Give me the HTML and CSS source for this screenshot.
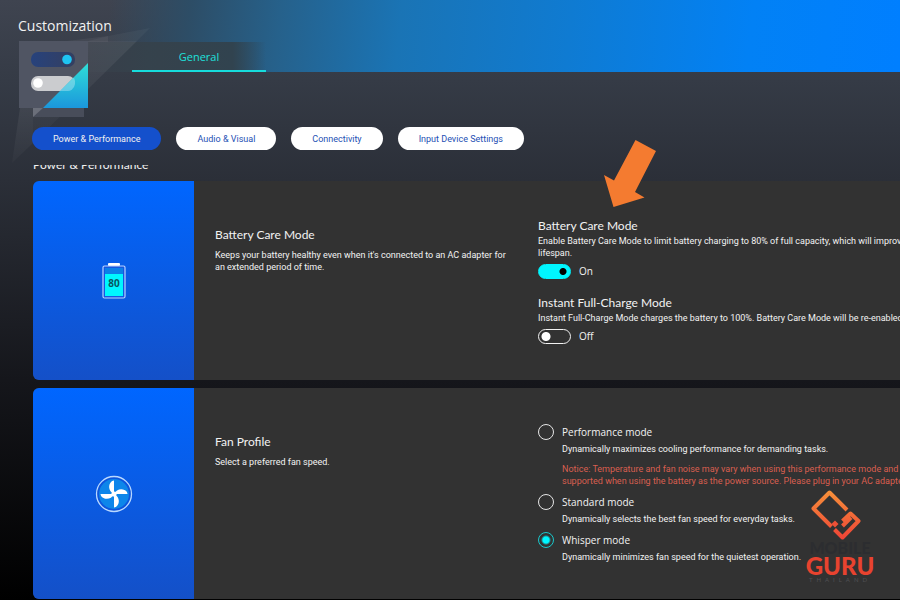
FILE: index.html
```
<!DOCTYPE html>
<html lang="en">
<head>
  <meta charset="UTF-8" />
  <meta name="viewport" content="width=device-width, initial-scale=1.0" />
  <title>Customization</title>
  <link rel="stylesheet" href="styles.css">
</head>
<body>
  <header class="header">
    <svg class="header-shards" width="160" height="170" viewBox="0 0 160 170" aria-hidden="true">
      <defs>
        <linearGradient id="shard" x1="0" y1="0" x2="0" y2="1">
          <stop offset="0" stop-color="#fff" stop-opacity=".07" />
          <stop offset="1" stop-color="#fff" stop-opacity=".02" />
        </linearGradient>
      </defs>
      <polygon points="58,42 108,36 108,42" fill="#fff" opacity=".05" />
      <polygon points="88,41 137,41 33,143 33,108 88,108" fill="url(#shard)" />
      <polygon points="88,41 108,36 150,28 137,41" fill="#fff" opacity=".04" />
      <polygon points="20,108 33,108 33,143 12,163" fill="url(#shard)" />
    </svg>
    <h1 class="title">Customization</h1>
    <div class="tab-row">
      <svg class="app-icon" width="70" height="77" viewBox="0 0 70 77" aria-hidden="true">
        <defs>
          <linearGradient id="corner" x1="0" y1="0" x2="0" y2="1">
            <stop offset="0" stop-color="#2fdfd8" />
            <stop offset="1" stop-color="#1b97dc" />
          </linearGradient>
          <linearGradient id="switch" x1="0" y1="0" x2="1" y2="0">
            <stop offset="0" stop-color="#27427c" />
            <stop offset="1" stop-color="#343f60" />
          </linearGradient>
        </defs>
        <rect x="14" y="67" width="51" height="9" fill="#484d5a" />
        <polygon points="14,67 24,67 14,76" fill="#6b6f7a" />
        <rect width="69" height="67" fill="#505563" />
        <rect x="12" y="11" width="44" height="15" rx="7" fill="url(#switch)" />
        <circle cx="48" cy="18.500" r="4.800" fill="#1fc4f2" />
        <rect x="12" y="35" width="44" height="15" rx="7" fill="#cbcccf" />
        <circle cx="19" cy="42" r="4.800" fill="#fff" />
        <polygon points="69,22 69,67 24,67" fill="url(#corner)" />
        <path d="M41 50 L55 36.500 Q58 44 53 48.500 Q51 50 49 50 Z" fill="#fff" opacity=".3" />
      </svg>
      <nav class="tabs">
        <a class="tab" href="#general">General</a>
      </nav>
    </div>
  </header>

  <nav class="filters">
    <button class="pill active">Power &amp; Performance</button>
    <button class="pill">Audio &amp; Visual</button>
    <button class="pill">Connectivity</button>
    <button class="pill">Input Device Settings</button>
  </nav>

  <main class="content" id="general">
    <h2 class="section-title">Power &amp; Performance</h2>

    <section class="card">
      <div class="tile">
        <svg width="24" height="36" viewBox="0 0 24 36" aria-hidden="true">
          <rect x="6" y="0" width="12" height="3" rx="1" fill="#fff" />
          <rect x="1" y="3" width="22" height="32" rx="1.500" fill="#1558e0" stroke="#b9d2ff" stroke-width="1.200" />
          <rect x="3" y="5" width="18" height="6" fill="#0b7fe8" />
          <rect x="3" y="11" width="18" height="22" fill="#00f6ff" />
          <text class="battery-level" x="12" y="24" text-anchor="middle">80</text>
        </svg>
      </div>
      <div class="about">
        <h3 class="heading">Battery Care Mode</h3>
        <p class="text">Keeps your battery healthy even when it's connected to an AC adapter for an extended period of time.</p>
      </div>
      <div class="options">
        <div class="option">
          <h3 class="heading">Battery Care Mode</h3>
          <p class="text">Enable Battery Care Mode to limit battery charging to 80% of full capacity, which will improve<br>lifespan.</p>
          <label class="switch">
            <input type="checkbox" class="switch-input" checked>
            <span>On</span>
          </label>
        </div>
        <div class="option">
          <h3 class="heading">Instant Full-Charge Mode</h3>
          <p class="text">Instant Full-Charge Mode charges the battery to 100%. Battery Care Mode will be re-enabled</p>
          <label class="switch">
            <input type="checkbox" class="switch-input">
            <span>Off</span>
          </label>
        </div>
      </div>
    </section>

    <section class="card">
      <div class="tile">
        <svg width="38" height="38" viewBox="0 0 38 38" aria-hidden="true">
          <circle cx="19" cy="19" r="17.500" fill="#0d55dc" stroke="#b9d8ff" stroke-width="1.300" />
          <circle cx="19" cy="19" r="15" fill="#0d86ea" />
          <g fill="#fff">
            <path id="blade" d="M19 19 C14.500 17 13 12 15 8.500 C16 6.500 17.500 5.500 19 5.500 Z" />
            <use href="#blade" transform="rotate(90 19 19)" />
            <use href="#blade" transform="rotate(180 19 19)" />
            <use href="#blade" transform="rotate(270 19 19)" />
            <circle cx="19" cy="19" r="2.600" />
          </g>
        </svg>
      </div>
      <div class="about">
        <h3 class="heading">Fan Profile</h3>
        <p class="text">Select a preferred fan speed.</p>
      </div>
      <div class="options modes">
        <div class="mode">
          <input type="radio" name="fan" id="fan-performance" class="radio">
          <label for="fan-performance" class="mode-name">Performance mode</label>
          <p class="text">Dynamically maximizes cooling performance for demanding tasks.</p>
          <p class="text notice">Notice: Temperature and fan noise may vary when using this performance mode and<br>supported when using the battery as the power source. Please plug in your AC adapter</p>
        </div>
        <div class="mode">
          <input type="radio" name="fan" id="fan-standard" class="radio">
          <label for="fan-standard" class="mode-name">Standard mode</label>
          <p class="text">Dynamically selects the best fan speed for everyday tasks.</p>
        </div>
        <div class="mode">
          <input type="radio" name="fan" id="fan-whisper" class="radio" checked>
          <label for="fan-whisper" class="mode-name">Whisper mode</label>
          <p class="text">Dynamically minimizes fan speed for the quietest operation.</p>
        </div>
      </div>
    </section>
  </main>

  <!-- pointer over the battery option -->
  <svg class="arrow" width="54" height="68" viewBox="0 0 54 68" aria-hidden="true">
    <polygon points="32.500,0 53,11 32,52 41.500,57.500 10.500,67 1,35 11,40.500" fill="#f47b30" />
  </svg>

  <div class="watermark">
    <svg width="50" height="51" viewBox="0 0 50 51" aria-hidden="true">
      <defs>
        <linearGradient id="guru" x1="0" y1="0" x2="0" y2="51" gradientUnits="userSpaceOnUse">
          <stop offset="0" stop-color="#f7923a" />
          <stop offset="1" stop-color="#ee4036" />
        </linearGradient>
      </defs>
      <g fill="none" stroke="url(#guru)" stroke-width="4" stroke-linejoin="round">
        <path d="M36 20 L18.500 2.500 L2.500 18.500 L20.500 36.500" />
        <path d="M31.500 36 L40 27.500 M31.500 31 L39.500 23.500 L47.500 31 L31.500 47.500 L23.500 39.500" />
      </g>
      <rect x="21.500" y="31.500" width="5" height="5" transform="rotate(45 24 34)" fill="#ee5036" />
    </svg>
    <span class="wm-mobile">MOBILE</span>
    <span class="wm-guru">GURU</span>
    <span class="wm-thailand">THAILAND</span>
  </div>
</body>
</html>
```
FILE: styles.css
```
* {
  box-sizing: border-box;
}

body {
  margin: 0;
  min-height: 100vh;
  position: relative;
  overflow: hidden;
  background: linear-gradient(#3f4450 0, #353b46 80px, #2b2f38 180px, #15161b 380px, #000 600px);
  color: #f2f2f2;
  font-family: "Open Sans", "Noto Sans", sans-serif;
  font-size: 9px;
}

h1, h2, h3, p {
  margin: 0;
  font-weight: normal;
}

.header {
  height: 72px;
  padding: 17px 0 0 18px;
  background: linear-gradient(96deg, transparent 110px, #2d4d66 190px, #26618b 280px, #1a74b5 400px, #0f7bd2 570px, #0281f5 750px, #007fff 900px);
}

.header-shards {
  position: absolute;
  left: 0;
  top: 0;
}

.title {
  font-size: 14px;
  line-height: 18px;
}

.tab-row {
  display: flex;
  align-items: flex-start;
  margin-top: 6px;
}

.app-icon {
  flex: none;
  position: relative;
  margin-left: 1px;
}

.tabs {
  flex: 1;
  margin-top: 1px;
  padding-left: 43px;
  background: linear-gradient(90deg, #383e49, #35424c 60px, transparent 150px);
}

.tab {
  display: block;
  width: 134px;
  height: 30px;
  border-bottom: 2px solid #16dcdc;
  background: linear-gradient(90deg, transparent, #35424c 20%, #31434f 75%, transparent);
  color: #1ee0dc;
  font-size: 11px;
  line-height: 29px;
  text-align: center;
  text-decoration: none;
}

.filters {
  display: flex;
  gap: 15px;
  position: relative;
  padding: 55px 32px 15px;
}

.pill {
  height: 23px;
  padding: 0 21px;
  border: none;
  border-radius: 12px;
  background: #fff;
  color: #2450b4;
  font-family: Roboto, sans-serif;
  font-size: 9px;
  white-space: nowrap;
  cursor: pointer;
}

.pill.active {
  background: #1450cc;
  color: #f2f2f2;
}

.content {
  padding-left: 33px;
  overflow: hidden;
}

/* scrolled partly under the filter bar */
.section-title {
  margin: -8px 0 8px;
  font-family: Lato, sans-serif;
  font-size: 12px;
  line-height: 16px;
}

.card {
  display: grid;
  grid-template-columns: 161px 344px 1fr;
  margin-bottom: 8px;
  border-radius: 6px 0 0 6px;
  background: #323232;
  overflow: hidden;
}

.tile {
  display: flex;
  align-items: center;
  justify-content: center;
  background: linear-gradient(#0066ff, #1450c8);
}

.battery-level {
  font-family: "Open Sans", sans-serif;
  font-size: 10px;
  font-weight: bold;
  fill: #0a5560;
}

.about {
  padding: 46px 28px 0 21px;
}

.heading {
  font-family: Lato, sans-serif;
  font-size: 12px;
  line-height: 16px;
}

.text {
  font-family: Roboto, sans-serif;
  line-height: 12px;
}

.about .text {
  margin-top: 6px;
}

.options {
  min-width: 0;
  padding: 37px 0 36px;
  white-space: nowrap;
}

.option + .option {
  margin-top: 16px;
}

.option .text {
  margin-top: 1px;
}

.switch {
  display: flex;
  align-items: center;
  gap: 8px;
  margin-top: 5px;
  font-size: 10px;
  line-height: 15px;
}

.switch-input {
  appearance: none;
  width: 33px;
  height: 15px;
  margin: 0;
  border: 1px solid #f2f2f2;
  border-radius: 8px;
  background: radial-gradient(circle at 7px 50%, #fff 4px, transparent 5px);
}

.switch-input:checked {
  border-color: #00f6ff;
  background: radial-gradient(circle at 24px 50%, #000 3px, #00f6ff 4px);
}

.modes {
  padding-top: 36px;
}

.mode {
  display: grid;
  grid-template-columns: 16px 1fr;
  column-gap: 8px;
}

.mode + .mode {
  margin-top: 7px;
}

.mode-name {
  font-size: 10px;
  line-height: 16px;
}

.mode .text {
  grid-column: 2;
  margin-top: 3px;
}

.mode .notice {
  margin-top: 8px;
  color: #d95f50;
}

.radio {
  appearance: none;
  width: 16px;
  height: 16px;
  margin: 0;
  border: 1px solid #e6e6e6;
  border-radius: 50%;
}

.radio:checked {
  border-color: #19c8cc;
  background: radial-gradient(circle, #00f6ff 3px, transparent 5px);
}

.arrow {
  position: absolute;
  left: 603px;
  top: 140px;
}

.watermark {
  position: absolute;
  left: 806px;
  top: 490px;
  display: flex;
  flex-direction: column;
  align-items: center;
  width: 68px;
  font-family: Lato, sans-serif;
}

.watermark svg {
  margin-right: 8px;
}

.wm-mobile {
  color: #2c2d30;
  font-size: 16px;
  font-weight: 900;
  line-height: 14px;
}

.wm-guru {
  color: #e8432f;
  font-size: 24px;
  font-weight: 900;
  line-height: 22px;
}

.wm-thailand {
  color: #505052;
  font-size: 6px;
  line-height: 6px;
  letter-spacing: 4px;
}
```
